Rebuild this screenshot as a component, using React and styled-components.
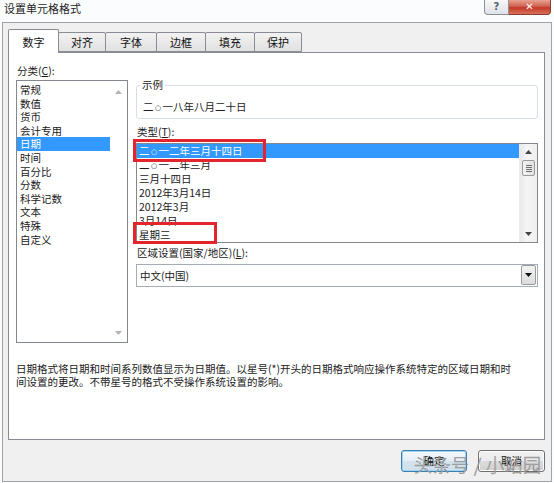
import React from 'react';
import styled, { createGlobalStyle } from 'styled-components';

const categories = ['常规', '数值', '货币', '会计专用', '日期', '时间', '百分比', '分数', '科学记数', '文本', '特殊', '自定义'];
const types = ['二○一二年三月十四日', '二○一二年三月', '三月十四日', '2012年3月14日', '2012年3月', '3月14日', '星期三'];
const tabs = ['数字', '对齐', '字体', '边框', '填充', '保护'];
const tabWidths = [51, 48, 52, 50, 50, 48];

const GlobalStyle = createGlobalStyle`
  html, body { margin: 0; padding: 0; }
  body {
    font-family: "Noto Sans CJK SC", "Noto Sans", sans-serif;
    font-size: 10.5px;
    color: #1a1a1a;
  }
`;

const Arrow = ({ dir = 'down', color = '#444' }) => (
    <svg width="7" height="4" viewBox="0 0 7 4">
        {dir === 'up'
            ? <polygon points="0,4 7,4 3.5,0" fill={color} />
            : <polygon points="0,0 7,0 3.5,4" fill={color} />}
    </svg>
);

// the ○ in Chinese dates is drawn small in the dialog font
const DateText = ({ children }) => (
    <>
        {children.split('○').map((part, i) => (
            <React.Fragment key={i}>
                {i > 0 && <SmallZero>○</SmallZero>}
                {part}
            </React.Fragment>
        ))}
    </>
);

const App = () => {
    return (
        <Window>
            <GlobalStyle />
            <TitleBar>
                <Title>设置单元格格式</Title>
                <CaptionButtons>
                    <HelpButton>?</HelpButton>
                    <CloseButton>✕</CloseButton>
                </CaptionButtons>
            </TitleBar>

            <Dialog>
                <TabRow>
                    {tabs.map((t, i) => (
                        <Tab key={t} $active={i === 0} $w={tabWidths[i]}>{t}</Tab>
                    ))}
                </TabRow>

                <Panel>
                    <TopSection>
                        <LeftColumn>
                            <FieldLabel>分类(<u>C</u>):</FieldLabel>
                            <CategoryList>
                                <Items>
                                    {categories.map((c) => (
                                        <CategoryItem key={c} $selected={c === '日期'}>{c}</CategoryItem>
                                    ))}
                                </Items>
                                <BlankScroll>
                                    <Arrow dir="up" color="#b4b4b4" />
                                    <Arrow dir="down" color="#b4b4b4" />
                                </BlankScroll>
                            </CategoryList>
                        </LeftColumn>

                        <RightColumn>
                            <SampleBox>
                                <Legend>示例</Legend>
                                <SampleText><DateText>二○一八年八月二十日</DateText></SampleText>
                            </SampleBox>

                            <FieldLabel $top={6}>类型(<u>T</u>):</FieldLabel>
                            <TypeList>
                                <Items>
                                    {types.map((t, i) => (
                                        <TypeItem key={t} $selected={i === 0}><DateText>{t}</DateText></TypeItem>
                                    ))}
                                </Items>
                                <ScrollBar>
                                    <ScrollArrow><Arrow dir="up" /></ScrollArrow>
                                    <Thumb>
                                        <Grip /><Grip /><Grip /><Grip />
                                    </Thumb>
                                    <ScrollTrack />
                                    <ScrollArrow><Arrow dir="down" /></ScrollArrow>
                                </ScrollBar>
                            </TypeList>

                            <FieldLabel $top={3}>区域设置(国家/地区)(<u>L</u>):</FieldLabel>
                            <Select>
                                <SelectValue>中文(中国)</SelectValue>
                                <SelectButton><Arrow dir="down" color="#111" /></SelectButton>
                            </Select>
                        </RightColumn>
                    </TopSection>

                    <Description>
                        日期格式将日期和时间系列数值显示为日期值。以星号(*)开头的日期格式响应操作系统特定的区域日期和时<br />
                        间设置的更改。不带星号的格式不受操作系统设置的影响。
                    </Description>
                </Panel>

                <ButtonRow>
                    <DialogButton $default>确定</DialogButton>
                    <DialogButton>取消</DialogButton>
                </ButtonRow>
            </Dialog>

            {/* annotation marks drawn over the screenshot */}
            <RedMark $x={133} $y={139} $w={133} $h={23} />
            <RedMark $x={133} $y={222} $w={84} $h={22} />
            <Watermark>头条号 / 小站园</Watermark>
        </Window>
    );
};

const Window = styled.div`
  position: relative;
  width: 554px;
  height: 483px;
  display: flex;
  flex-direction: column;
  background: #fbfcfd;
  overflow: hidden;
`;

const TitleBar = styled.div`
  height: 22px;
  flex-shrink: 0;
  display: flex;
  justify-content: space-between;
  align-items: flex-start;
  padding: 0 3px 0 4px;
`;

const Title = styled.div`
  font-size: 11px;
  line-height: 17px;
  color: #1e1e1e;
`;

const CaptionButtons = styled.div`
  display: flex;
`;

const HelpButton = styled.div`
  width: 25px;
  height: 15px;
  box-sizing: border-box;
  border: 1px solid #8d9196;
  border-top: none;
  border-radius: 0 0 0 4px;
  background: linear-gradient(#f7f8f9, #dde1e6);
  color: #55606c;
  font-family: "DejaVu Sans", sans-serif;
  font-size: 10px;
  font-weight: bold;
  line-height: 14px;
  text-align: center;
`;

const CloseButton = styled.div`
  width: 42px;
  height: 15px;
  box-sizing: border-box;
  border: 1px solid #8a3a2e;
  border-top: none;
  border-left: none;
  border-radius: 0 0 4px 0;
  background: linear-gradient(#e8a294, #d0614f 45%, #c23a26 55%, #d9705a);
  color: #fff;
  font-family: "DejaVu Sans", sans-serif;
  font-size: 10px;
  font-weight: bold;
  line-height: 14px;
  text-align: center;
`;

const Dialog = styled.div`
  flex: 1;
  margin: 0 2px 1px 2px;
  border: 1px solid #a3a3a3;
  background: #f0f0f0;
  padding: 6px 6px 0 5px;
  display: flex;
  flex-direction: column;
`;

const TabRow = styled.div`
  height: 23px;
  display: flex;
  align-items: flex-end;
  position: relative;
  z-index: 1;
`;

const Tab = styled.div`
  width: ${(p) => p.$w}px;
  box-sizing: border-box;
  height: ${(p) => (p.$active ? 24 : 20)}px;
  margin-bottom: ${(p) => (p.$active ? -1 : 0)}px;
  margin-left: -1px;
  &:first-child { margin-left: 0; }
  border: 1px solid #898c95;
  border-bottom: ${(p) => (p.$active ? 'none' : '1px solid #898c95')};
  border-radius: 2px 2px 0 0;
  background: ${(p) => (p.$active ? '#fff' : 'linear-gradient(#f2f2f2, #e1e1e1)')};
  font-size: 11px;
  line-height: ${(p) => (p.$active ? 25 : 19)}px;
  text-align: center;
  color: #111;
  z-index: ${(p) => (p.$active ? 2 : 1)};
`;

const Panel = styled.div`
  height: 388px;
  box-sizing: border-box;
  border: 1px solid #898c95;
  background: #fff;
  padding: 11px 6px 0 7px;
`;

const TopSection = styled.div`
  display: flex;
  gap: 8px;
`;

const LeftColumn = styled.div`
  width: 112px;
  display: flex;
  flex-direction: column;
`;

const RightColumn = styled.div`
  width: 402px;
  display: flex;
  flex-direction: column;
  padding-top: 15px;
`;

const FieldLabel = styled.div`
  line-height: 14px;
  margin-top: ${(p) => p.$top || 0}px;
  margin-bottom: ${(p) => (p.$top ? 4 : 2)}px;
  padding-left: 1px;
  u { text-decoration: underline; text-underline-offset: 1px; }
`;

const CategoryList = styled.div`
  height: 263px;
  box-sizing: border-box;
  border: 1px solid #828790;
  display: flex;
`;

const Items = styled.div`
  flex: 1;
  display: flex;
  flex-direction: column;
  overflow: hidden;
`;

const CategoryItem = styled.div`
  height: 13.6px;
  line-height: 13.6px;
  padding-left: 3px;
  &:first-child { margin-top: 2px; }
  background: ${(p) => (p.$selected ? '#3399ff' : 'transparent')};
  color: ${(p) => (p.$selected ? '#fff' : '#1a1a1a')};
  white-space: nowrap;
`;

const BlankScroll = styled.div`
  width: 17px;
  display: flex;
  flex-direction: column;
  justify-content: space-between;
  align-items: center;
  padding: 9px 0 7px;
`;

const SampleBox = styled.fieldset`
  margin: 0;
  height: 40px;
  box-sizing: border-box;
  border: 1px solid #d5dfe5;
  border-radius: 3px;
  padding: 0 0 0 6px;
`;

const Legend = styled.legend`
  padding: 0 2px;
  margin-left: -3px;
  line-height: 12px;
`;

const SampleText = styled.div`
  line-height: 14px;
  margin-top: 9px;
`;

const SmallZero = styled.span`
  font-family: "DejaVu Sans", sans-serif;
  font-size: 7px;
  display: inline-block;
  width: 9px;
  text-align: center;
  vertical-align: 1px;
`;

const TypeList = styled.div`
  height: 100px;
  box-sizing: border-box;
  border: 1px solid #828790;
  display: flex;
`;

const TypeItem = styled.div`
  height: 14px;
  line-height: 14px;
  padding-left: 2px;
  background: ${(p) => (p.$selected ? '#3399ff' : 'transparent')};
  color: ${(p) => (p.$selected ? '#fff' : '#1a1a1a')};
  white-space: nowrap;
`;

const ScrollBar = styled.div`
  width: 17px;
  display: flex;
  flex-direction: column;
  align-items: center;
  background: linear-gradient(90deg, #e9e9e9, #f5f5f5 40%, #f0f0f0);
  border-left: 1px solid #ececec;
`;

const ScrollArrow = styled.div`
  height: 16px;
  display: flex;
  align-items: center;
  justify-content: center;
`;

const Thumb = styled.div`
  width: 13px;
  height: 16px;
  box-sizing: border-box;
  border: 1px solid #9a9a9a;
  border-radius: 2px;
  background: linear-gradient(90deg, #f4f4f4, #e2e2e2);
  display: flex;
  flex-direction: column;
  justify-content: center;
  align-items: center;
  gap: 1px;
`;

const Grip = styled.div`
  width: 6px;
  height: 1px;
  background: #6f6f6f;
`;

const ScrollTrack = styled.div`
  flex: 1;
`;

const Select = styled.div`
  height: 23px;
  box-sizing: border-box;
  border: 1px solid #a5acb5;
  display: flex;
  align-items: stretch;
`;

const SelectValue = styled.div`
  flex: 1;
  line-height: 21px;
  padding-left: 3px;
`;

const SelectButton = styled.div`
  width: 15px;
  margin: 0 1px 1px 0;
  box-sizing: border-box;
  border: 1px solid #9a9a9a;
  border-radius: 2px;
  background: linear-gradient(#f3f3f3, #dcdcdc);
  display: flex;
  align-items: center;
  justify-content: center;
`;

const Description = styled.div`
  margin-top: 19px;
  line-height: 13px;
  font-size: 10.5px;
  white-space: nowrap;
`;

const ButtonRow = styled.div`
  display: flex;
  justify-content: flex-end;
  gap: 11px;
  margin-top: 10px;
`;

const DialogButton = styled.div`
  width: ${(p) => (p.$default ? 66 : 67)}px;
  height: 22px;
  box-sizing: border-box;
  border: 1px solid ${(p) => (p.$default ? '#3c7fb1' : '#707070')};
  border-radius: 3px;
  background: ${(p) => (p.$default
        ? 'linear-gradient(#f4f9fc, #e4eef5 50%, #d4e3ee 51%, #cfe0ec)'
        : 'linear-gradient(#f2f2f2, #ebebeb 50%, #dddddd 51%, #cfcfcf)')};
  box-shadow: ${(p) => (p.$default ? 'inset 0 0 0 1px #9fd3f3' : 'inset 0 0 0 1px #fcfcfc')};
  line-height: 20px;
  text-align: center;
  color: #111;
`;

const RedMark = styled.div`
  position: absolute;
  left: ${(p) => p.$x}px;
  top: ${(p) => p.$y}px;
  width: ${(p) => p.$w}px;
  height: ${(p) => p.$h}px;
  box-sizing: border-box;
  border: 3px solid #e3262d;
  pointer-events: none;
`;

const Watermark = styled.div`
  position: absolute;
  left: 414px;
  top: 452px;
  font-size: 18px;
  line-height: 24px;
  font-weight: 300;
  color: rgba(255, 255, 255, 0.85);
  -webkit-text-stroke: 0.6px rgba(90, 90, 90, 0.7);
  letter-spacing: 0.5px;
  white-space: nowrap;
  pointer-events: none;
`;

export default App;
